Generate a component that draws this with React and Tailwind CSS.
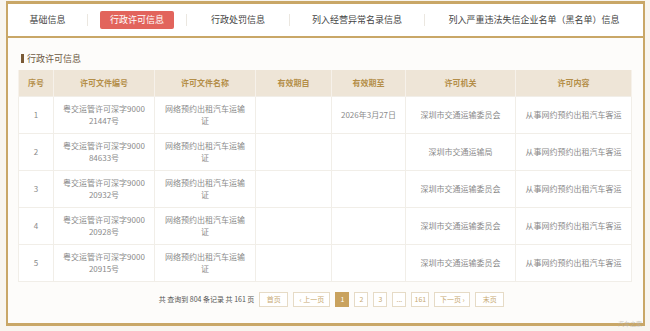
import React from 'react';

const tabs = [
  { label: '基础信息', w: 'w-[79px]' },
  { label: '行政许可信息', w: 'w-[98px]', active: true },
  { label: '行政处罚信息', w: 'w-[102px]' },
  { label: '列入经营异常名录信息', w: 'w-[134px]' },
  { label: '列入严重违法失信企业名单（黑名单）信息', w: 'flex-1' },
];

const cols = [
  { label: '序号', w: 'w-[35px]' },
  { label: '许可文件编号', w: 'w-[101px]' },
  { label: '许可文件名称', w: 'w-[101px]' },
  { label: '有效期自', w: 'w-[76px]' },
  { label: '有效期至', w: 'w-[74px]' },
  { label: '许可机关', w: 'w-[110px]' },
  { label: '许可内容', w: 'w-[116px]' },
];

const rows = [
  { no: 1, code: '21447号', to: '2026年3月27日', org: '深圳市交通运输委员会' },
  { no: 2, code: '84633号', to: '', org: '深圳市交通运输局' },
  { no: 3, code: '20932号', to: '', org: '深圳市交通运输委员会' },
  { no: 4, code: '20928号', to: '', org: '深圳市交通运输委员会' },
  { no: 5, code: '20915号', to: '', org: '深圳市交通运输委员会' },
];

function PageBtn({ children, active, w }) {
  return (
    <span
      className={
        'flex h-[15px] items-center justify-center border text-[7px] leading-none ' +
        w +
        (active
          ? ' border-[#c9a25e] bg-[#c9a25e] text-white'
          : ' border-[#e6dbc6] bg-white text-[#c8aa72]')
      }
    >
      {children}
    </span>
  );
}

export default function App() {
  return (
    <div
      className="relative h-[331px] w-[650px] overflow-hidden bg-[#f8f5ef] pt-px"
      style={{ fontFamily: '"Noto Sans CJK SC", "Liberation Sans", sans-serif' }}
    >
      <div className="ml-[6px] w-[639px] border-x-2 border-t-[3px] border-b-[3px] border-[#c9a767] bg-[#fdfcfa]">
        {/* tabs */}
        <div className="flex h-[34px] items-center border-b-2 border-[#c9a767] bg-white">
          {tabs.map((t, i) => (
            <React.Fragment key={t.label}>
              {i > 0 && <span className="h-[12px] w-px bg-[#ebe7e0]" />}
              <div className={'flex items-center justify-center ' + t.w}>
                {t.active ? (
                  <span className="flex h-[18px] w-[74px] items-center justify-center rounded-[2px] bg-[#e2645c] text-[9px] text-white">
                    {t.label}
                  </span>
                ) : (
                  <span className="text-[9px] text-[#444]">{t.label}</span>
                )}
              </div>
            </React.Fragment>
          ))}
        </div>

        {/* content */}
        <div className="px-[10px] pt-[14px] pb-[16px]">
          <div className="flex h-[12px] items-center gap-[3px] pl-[3px]">
            <span className="h-[9px] w-[3px] bg-[#7a5a36]" />
            <span className="text-[9px] leading-none text-[#6d5a44]">行政许可信息</span>
          </div>

          <table className="mt-[6px] w-[613px] table-fixed border-collapse">
            <thead>
              <tr className="h-[26px] bg-[#eee5d7]">
                {cols.map((c) => (
                  <th
                    key={c.label}
                    className={'border-x border-[#f6f1ea] text-[8px] font-bold text-[#b48e48] ' + c.w}
                  >
                    {c.label}
                  </th>
                ))}
              </tr>
            </thead>
            <tbody>
              {rows.map((r) => (
                <tr key={r.no} className="h-[37px] bg-white text-[8px] leading-[12px] text-[#8a8a8a]">
                  <td className="border border-[#f1eee8] text-center">{r.no}</td>
                  <td className="border border-[#f1eee8] text-center">
                    粤交运管许可深字9000
                    <br />
                    {r.code}
                  </td>
                  <td className="border border-[#f1eee8] text-center">
                    网络预约出租汽车运输
                    <br />
                    证
                  </td>
                  <td className="border border-[#f1eee8]" />
                  <td className="border border-[#f1eee8] text-center">{r.to}</td>
                  <td className="border border-[#f1eee8] text-center">{r.org}</td>
                  <td className="border border-[#f1eee8] text-center">从事网约预约出租汽车客运</td>
                </tr>
              ))}
            </tbody>
          </table>

          {/* pagination */}
          <div className="mt-[10px] flex items-center justify-center gap-[5px] pl-[12px]">
            <span className="text-[7px] text-[#555]">共 查询到 804 条记录 共 161 页</span>
            <PageBtn w="w-[29px]">首页</PageBtn>
            <PageBtn w="w-[37px]">‹ 上一页</PageBtn>
            <PageBtn w="w-[14px]" active>1</PageBtn>
            <PageBtn w="w-[14px]">2</PageBtn>
            <PageBtn w="w-[14px]">3</PageBtn>
            <PageBtn w="w-[14px]">...</PageBtn>
            <PageBtn w="w-[18px]">161</PageBtn>
            <PageBtn w="w-[36px]">下一页 ›</PageBtn>
            <PageBtn w="w-[29px]">末页</PageBtn>
          </div>
        </div>
      </div>
      <span className="absolute right-[8px] bottom-[3px] text-[6px] text-[#b9b2a6] opacity-70">汽车之家</span>
    </div>
  );
}
